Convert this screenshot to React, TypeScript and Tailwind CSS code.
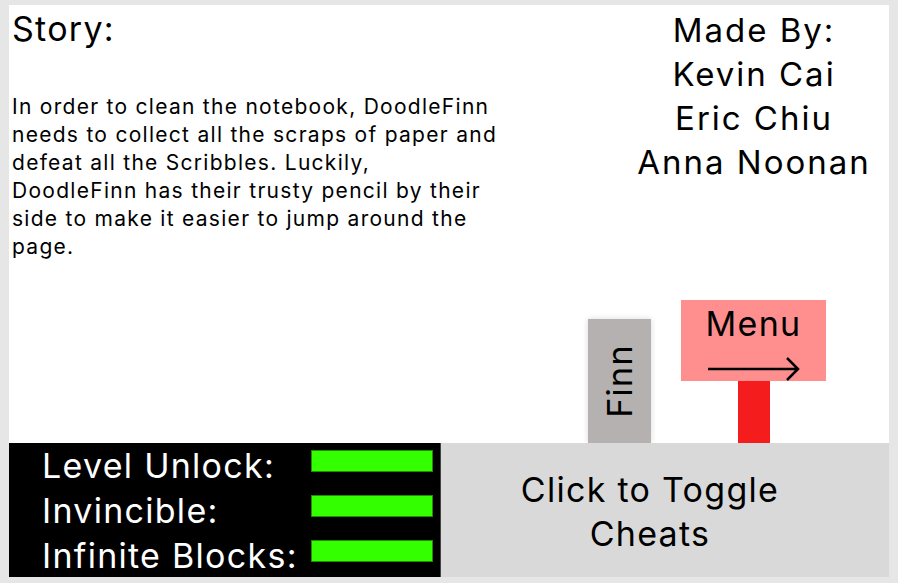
const font = { fontFamily: "Inter, 'Noto Sans', sans-serif" };

function CheatBar() {
  return <div className="mt-[7px] h-[22px] w-[122px] border border-[#1f8f00] bg-[#33ff00]" />;
}

export default function App() {
  const cheats = ["Level Unlock:", "Invincible:", "Infinite Blocks:"];

  return (
    <div
      className="h-[583px] w-[898px] bg-[#e6e6e6] pl-[9px] pt-[5px] tracking-[0.08em] text-black"
      style={font}
    >
      <div className="flex h-[572px] w-[880px] flex-col">
        <div className="flex h-[438px] flex-col bg-white">
          <div className="flex">
            <div className="w-[500px] pl-[3px] pt-[4px]">
              <h1 className="text-[34px] leading-[40px]">Story:</h1>
              <p className="mt-[44px] w-[487px] text-[21px] leading-[28px]">
                In order to clean the notebook, DoodleFinn needs to collect all
                the scraps of paper and defeat all the Scribbles. Luckily,
                DoodleFinn has their trusty pencil by their side to make it
                easier to jump around the page.
              </p>
            </div>
            <div className="flex-1 pl-[110px] pt-[3px] text-center text-[33px] leading-[44px] tracking-[0.06em]">
              <p>Made By:</p>
              <p>Kevin Cai</p>
              <p>Eric Chiu</p>
              <p>Anna Noonan</p>
            </div>
          </div>

          <div className="mt-auto flex items-end justify-end gap-[30px] pr-[63px]">
            <div className="flex h-[124px] w-[63px] items-center justify-center bg-[#b5b1b0] shadow-[0_0_6px_rgba(0,0,0,0.15)]">
              <span className="-rotate-90 text-[34px] leading-none whitespace-nowrap">
                Finn
              </span>
            </div>
            <div className="flex flex-col items-center">
              <div className="flex h-[81px] w-[145px] flex-col items-center bg-[#ff8f8f] pt-[5px]">
                <span className="text-[34px] leading-[38px]">Menu</span>
                <svg width="94" height="24" viewBox="0 0 94 24" className="mt-auto">
                  <path
                    d="M1 12 H91 M80 1 L91 12 L80 23"
                    stroke="black"
                    strokeWidth="2.5"
                    fill="none"
                  />
                </svg>
              </div>
              <div className="h-[62px] w-[32px] bg-[#f41c1c]" />
            </div>
          </div>
        </div>

        <div className="flex h-[134px]">
          <div className="flex w-[431px] bg-black pl-[33px] text-white">
            <div className="flex flex-col">
              {cheats.map((label) => (
                <div key={label} className="flex h-[45px] items-start">
                  <span className="w-[269px] text-[34px] leading-[45px] whitespace-nowrap">{label}</span>
                  <CheatBar />
                </div>
              ))}
            </div>
          </div>
          <div className="flex flex-1 items-center justify-center border-l border-[#444] bg-[#d9d9d9] pr-[30px] pt-[4px] text-center text-[34px] leading-[44px]">
            <p>
              Click to Toggle
              <br />
              Cheats
            </p>
          </div>
        </div>
      </div>
    </div>
  );
}
